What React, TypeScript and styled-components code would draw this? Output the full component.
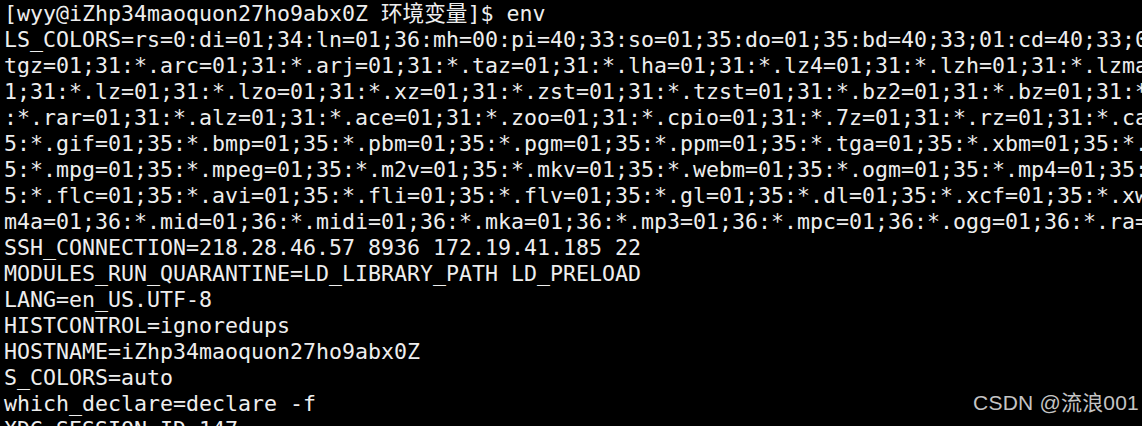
import React from "react";
import styled, { createGlobalStyle } from "styled-components";

const GlobalStyle = createGlobalStyle`
  html, body {
    margin: 0;
    padding: 0;
    background: #000;
    overflow: hidden;
  }
`;

const Screen = styled.div`
  position: relative;
  width: 1142px;
  height: 426px;
  background: #000;
  overflow: hidden;
  box-sizing: border-box;
  padding: 1px 0 0 4px;
`;

const Output = styled.pre`
  margin: 0;
  font-family: "DejaVu Sans Mono", "Noto Sans CJK SC", monospace;
  font-size: 21.6px;
  line-height: 26px;
  color: #eeeeee;
  white-space: pre;
`;

const Line = styled.div`
  white-space: pre;
  height: 26px;
`;

const Watermark = styled.div`
  position: absolute;
  right: 3px;
  bottom: 10px;
  font-family: "Liberation Sans", "Noto Sans CJK SC", sans-serif;
  font-size: 21px;
  color: #c4c4c4;
  letter-spacing: 0.2px;
`;

const lines: string[] = [
  "[wyy@iZhp34maoquon27ho9abx0Z 环境变量]$ env",
  "LS_COLORS=rs=0:di=01;34:ln=01;36:mh=00:pi=40;33:so=01;35:do=01;35:bd=40;33;01:cd=40;33;01:or=40;31;01:mi=01;05;37;41:su=37;41",
  "tgz=01;31:*.arc=01;31:*.arj=01;31:*.taz=01;31:*.lha=01;31:*.lz4=01;31:*.lzh=01;31:*.lzma=01;31:*.tlz=01;31:*.txz=01;31",
  "1;31:*.lz=01;31:*.lzo=01;31:*.xz=01;31:*.zst=01;31:*.tzst=01;31:*.bz2=01;31:*.bz=01;31:*.tbz=01;31:*.tbz2=01;31",
  ":*.rar=01;31:*.alz=01;31:*.ace=01;31:*.zoo=01;31:*.cpio=01;31:*.7z=01;31:*.rz=01;31:*.cab=01;31:*.jpg=01;35",
  "5:*.gif=01;35:*.bmp=01;35:*.pbm=01;35:*.pgm=01;35:*.ppm=01;35:*.tga=01;35:*.xbm=01;35:*.xpm=01;35:*.tif=01;35",
  "5:*.mpg=01;35:*.mpeg=01;35:*.m2v=01;35:*.mkv=01;35:*.webm=01;35:*.ogm=01;35:*.mp4=01;35:*.m4v=01;35",
  "5:*.flc=01;35:*.avi=01;35:*.fli=01;35:*.flv=01;35:*.gl=01;35:*.dl=01;35:*.xcf=01;35:*.xwd=01;35:*.yuv=01;35",
  "m4a=01;36:*.mid=01;36:*.midi=01;36:*.mka=01;36:*.mp3=01;36:*.mpc=01;36:*.ogg=01;36:*.ra=01;36:*.wav=01;36",
  "SSH_CONNECTION=218.28.46.57 8936 172.19.41.185 22",
  "MODULES_RUN_QUARANTINE=LD_LIBRARY_PATH LD_PRELOAD",
  "LANG=en_US.UTF-8",
  "HISTCONTROL=ignoredups",
  "HOSTNAME=iZhp34maoquon27ho9abx0Z",
  "S_COLORS=auto",
  "which_declare=declare -f",
  "XDG_SESSION_ID=147",
];

export default function App() {
  return (
    <>
      <GlobalStyle />
      <Screen>
        <Output>
          {lines.map((l, i) => (
            <Line key={i}>{l}</Line>
          ))}
        </Output>
        <Watermark>CSDN @流浪001</Watermark>
      </Screen>
    </>
  );
}
